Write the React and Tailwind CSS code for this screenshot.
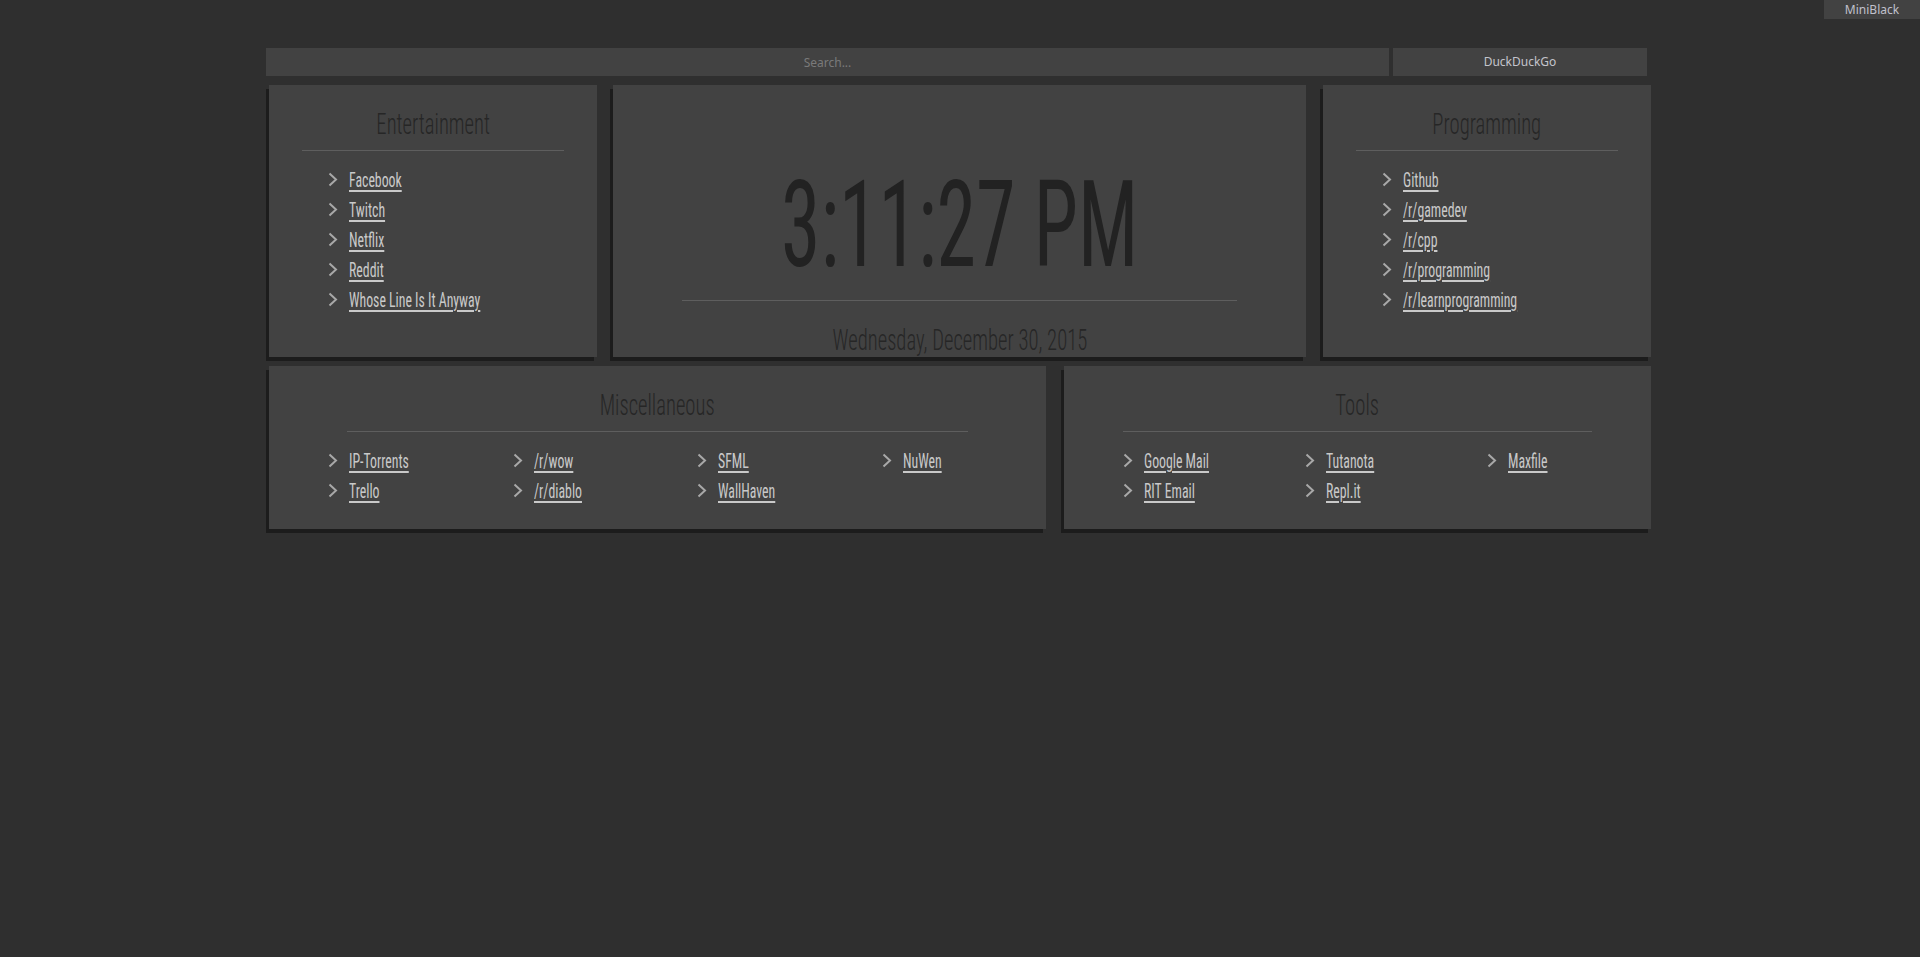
import React from "react";

const Chevron = () => (
  <svg width="10" height="15" viewBox="0 0 10 15" className="shrink-0 mt-[7px]">
    <polyline points="1.5,1.5 8,7.5 1.5,13.5" fill="none" stroke="#a8a8a8" strokeWidth="2" />
  </svg>
);

const cond = "font-['Roboto_Condensed',Roboto,sans-serif]";

function Item({ t }) {
  return (
    <li className="flex items-start h-[30px] gap-[11px]">
      <Chevron />
      <a href="#" className={`${cond} inline-block origin-left scale-x-[0.69] text-[#c9c9c9] underline underline-offset-[3px] text-[20px] leading-[30px] whitespace-nowrap`}>{t}</a>
    </li>
  );
}

function LinkList({ items }) {
  return (
    <ul className="pl-[59px] mt-[14px]">
      {items.map((t) => (
        <Item key={t} t={t} />
      ))}
    </ul>
  );
}

function GridList({ items, cols }) {
  return (
    <ul className={`pl-[59px] mt-[14px] grid ${cols}`}>
      {items.map((t) => (
        <Item key={t} t={t} />
      ))}
    </ul>
  );
}

function Title({ children }) {
  return (
    <>
      <div className="pt-[24px] h-[54px] flex justify-center">
        <span className={`${cond} inline-block scale-x-[0.7] text-[29.5px] leading-[30px] font-light text-[#262626] whitespace-nowrap`}>{children}</span>
      </div>
      <div className="mt-[11px] mx-auto w-[80%] border-t border-[#5e5e5e]" />
    </>
  );
}

const card = "bg-[#424242] shadow-[-3px_4px_0_#1c1c1c]";

export default function App() {
  return (
    <div className="relative min-h-[957px] w-full bg-[#2f2f2f]">
      <div className="absolute top-0 right-0 w-[96px] h-[19px] bg-[#424242] text-[#c0c0cc] text-[12px] leading-[19px] text-center font-['Noto_Sans',sans-serif]">MiniBlack</div>
      <div className="pt-[48px] pl-[266px]">
        <div className="flex gap-[4px] h-[28px]">
          <input placeholder="Search..." className="w-[1123px] h-[28px] bg-[#424242] text-center text-[12px] text-[#c0c0c0] placeholder:text-[#7a7a7a] outline-none font-['Noto_Sans',sans-serif]" />
          <button className="w-[254px] h-[28px] bg-[#424242] text-[12px] text-[#c4c4cc] font-['Noto_Sans',sans-serif]">DuckDuckGo</button>
        </div>
        <div className="flex mt-[9px] ml-[3px]">
          <div className={`${card} w-[328px] h-[272px]`}>
            <Title>Entertainment</Title>
            <LinkList items={["Facebook", "Twitch", "Netflix", "Reddit", "Whose Line Is It Anyway"]} />
          </div>
          <div className={`${card} w-[693px] h-[272px] ml-[16px] flex flex-col items-center`}>
            <div className="mt-[80px] h-[121px] flex justify-center">
              <span className={`${cond} inline-block scale-x-[0.66] text-[121px] leading-[121px] text-[#222222] whitespace-nowrap`}>3:11:27 PM</span>
            </div>
            <div className="mt-[14px] w-[80%] border-t border-[#5e5e5e]" />
            <div className="mt-[24px] h-[30px] flex justify-center">
              <span className={`${cond} inline-block scale-x-[0.7] text-[29.5px] leading-[30px] font-light text-[#262626] whitespace-nowrap`}>Wednesday, December 30, 2015</span>
            </div>
          </div>
          <div className={`${card} w-[328px] h-[272px] ml-[17px]`}>
            <Title>Programming</Title>
            <LinkList items={["Github", "/r/gamedev", "/r/cpp", "/r/programming", "/r/learnprogramming"]} />
          </div>
        </div>
        <div className="flex mt-[9px] ml-[3px]">
          <div className={`${card} w-[777px] h-[163px]`}>
            <Title>Miscellaneous</Title>
            <GridList cols="grid-cols-[repeat(4,184.5px)]" items={["IP-Torrents", "/r/wow", "SFML", "NuWen", "Trello", "/r/diablo", "WallHaven"]} />
          </div>
          <div className={`${card} w-[587px] h-[163px] ml-[18px]`}>
            <Title>Tools</Title>
            <GridList cols="grid-cols-[repeat(3,182px)]" items={["Google Mail", "Tutanota", "Maxfile", "RIT Email", "Repl.it"]} />
          </div>
        </div>
      </div>
    </div>
  );
}
